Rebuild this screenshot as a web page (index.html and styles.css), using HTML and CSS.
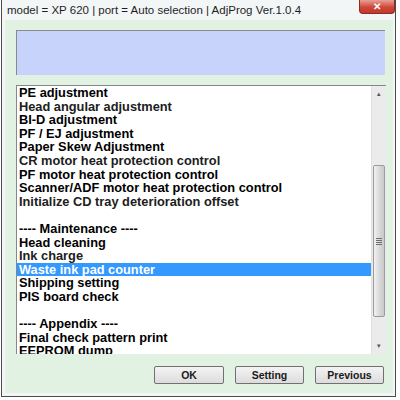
FILE: index.html
```html
<!DOCTYPE html>
<html lang="en">
  <head>
    <meta charset="UTF-8" />
    <title>AdjProg</title>
    <link rel="stylesheet" href="styles.css">
  </head>
  <body>
    <div class="window">
      <div class="titlebar">
        <span class="title">model = XP 620 | port = Auto selection | AdjProg Ver.1.0.4</span>
        <span class="close">&#x2715;</span>
      </div>

      <div class="client">
        <div class="info-box"></div>

        <div class="list">
          <ul class="items">
            <li>PE adjustment</li>
            <li class="thin">Head angular adjustment</li>
            <li>BI-D adjustment</li>
            <li>PF / EJ adjustment</li>
            <li>Paper Skew Adjustment</li>
            <li class="thin">CR motor heat protection control</li>
            <li>PF motor heat protection control</li>
            <li>Scanner/ADF motor heat protection control</li>
            <li class="thin">Initialize CD tray deterioration offset</li>
            <li>&nbsp;</li>
            <li>---- Maintenance ----</li>
            <li>Head cleaning</li>
            <li class="thin">Ink charge</li>
            <li class="selected">Waste ink pad counter</li>
            <li>Shipping setting</li>
            <li>PIS board check</li>
            <li>&nbsp;</li>
            <li>---- Appendix ----</li>
            <li>Final check pattern print</li>
            <li>EEPROM dump</li>
          </ul>
          <div class="scrollbar">
            <div class="arrow">&#9652;</div>
            <div class="track">
              <div class="thumb"><span class="grip"></span></div>
            </div>
            <div class="arrow">&#9662;</div>
          </div>
        </div>

        <div class="buttons">
          <button class="btn btn-ok">OK</button>
          <button class="btn">Setting</button>
          <button class="btn">Previous</button>
        </div>
      </div>
    </div>
  </body>
</html>
```

FILE: styles.css
```css
* {
  box-sizing: border-box;
}

body {
  margin: 0;
  width: 400px;
  height: 400px;
  background: #ffffff;
  font-family: "Liberation Sans", Arial, sans-serif;
  overflow: hidden;
}

.window {
  margin-left: 1px;
  width: 395px;
  height: 397px;
  border: 1px solid #4b4b4b;
  border-top: none;
  background: #f3f6f6;
  display: flex;
  flex-direction: column;
}

.titlebar {
  height: 20px;
  display: flex;
  align-items: flex-start;
  padding-left: 5px;
}

.title {
  font-size: 11.5px;
  line-height: 20px;
  color: #1e1e1e;
}

.close {
  margin-left: auto;
  width: 36px;
  height: 14px;
  border: 1px solid #8c2b22;
  border-top: none;
  border-radius: 0 0 4px 4px;
  background: linear-gradient(#e8a196, #d0473a 55%, #c0392d);
  color: #ffffff;
  font-size: 10px;
  font-weight: bold;
  line-height: 13px;
  text-align: center;
}

.client {
  flex: 1;
  margin: 0 2px 3px 3px;
  background: #e2f2e2;
  padding: 10px 7px 0 11px;
  display: flex;
  flex-direction: column;
}

.info-box {
  height: 45px;
  margin-right: 1px;
  background: #c8d3fc;
  border-top: 1px solid #8a8a8a;
  border-left: 1px solid #8a8a8a;
}

.list {
  margin-top: 10px;
  height: 269px;
  background: #ffffff;
  border-top: 1px solid #828790;
  border-left: 1px solid #828790;
  display: flex;
}

.items {
  flex: 1;
  list-style: none;
  margin: 0;
  padding: 0;
  overflow: hidden;
  font-size: 12.8px;
  font-weight: bold;
  line-height: 13.6px;
  color: #000000;
  white-space: nowrap;
}

.items li {
  padding-left: 2px;
}

.items .thin {
  color: #202020;
}

.items .selected {
  background: #3399ff;
  color: #ffffff;
}

.scrollbar {
  width: 15px;
  background: #ebebeb;
  border-left: 1px solid #e0e0e0;
  display: flex;
  flex-direction: column;
}

.arrow {
  height: 16px;
  font-size: 7px;
  line-height: 16px;
  text-align: center;
  color: #555555;
}

.track {
  flex: 1;
  padding-top: 63px;
}

.thumb {
  height: 152px;
  margin: 0 1px;
  border: 1px solid #9b9b9b;
  border-radius: 2px;
  background: linear-gradient(to right, #f2f2f2, #d6d6d6 60%, #c9c9c9);
  display: flex;
  align-items: center;
  justify-content: center;
}

.grip {
  width: 6px;
  height: 7px;
  background: repeating-linear-gradient(#6e6e6e 0 1px, transparent 1px 2px);
}

.buttons {
  margin-top: 12px;
  display: flex;
  justify-content: flex-end;
  gap: 11px;
  padding-right: 2px;
}

.btn {
  height: 18px;
  width: 69px;
  padding: 0;
  border: 1px solid #707070;
  border-radius: 2px;
  background: linear-gradient(#f3f3f3, #e8e8e8 50%, #dcdcdc);
  font-family: "Liberation Sans", Arial, sans-serif;
  font-size: 10.5px;
  font-weight: bold;
  color: #1a1a1a;
}

.btn-ok {
  width: 70px;
}
```
